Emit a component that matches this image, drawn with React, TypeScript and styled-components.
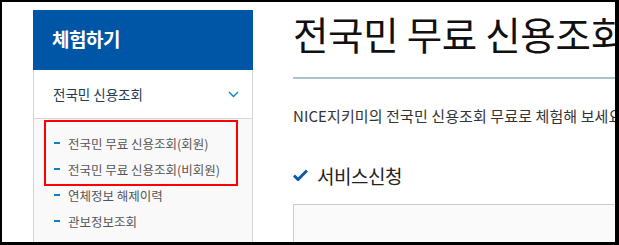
import React from 'react';
import styled, { createGlobalStyle } from 'styled-components';

const GlobalStyle = createGlobalStyle`
  html, body {
    margin: 0;
    padding: 0;
    background: #000;
  }
  body {
    font-family: "Noto Sans CJK KR", "Noto Sans", sans-serif;
  }
`;

const Frame = styled.div`
  box-sizing: border-box;
  width: 619px;
  height: 245px;
  border-style: solid;
  border-color: #000;
  border-width: 2px 4px 3px 2px;
  background: #fff;
  overflow: hidden;
`;

const Page = styled.div`
  display: flex;
  align-items: flex-start;
  padding: 8px 0 0 31px;
`;

const Sidebar = styled.aside`
  position: relative;
  flex: 0 0 220px;
  width: 220px;
`;

const SideHeader = styled.h2`
  margin: 0;
  height: 60px;
  box-sizing: border-box;
  padding: 15px 0 0 19px;
  background: #0056a6;
  color: #fff;
  font-size: 19px;
  font-weight: 700;
  letter-spacing: -0.5px;
`;

const NavItem = styled.div`
  display: flex;
  align-items: center;
  justify-content: space-between;
  height: 48px;
  padding: 0 13px 0 19px;
  border-left: 1px solid #d5d5d5;
  border-right: 1px solid #d5d5d5;
  border-bottom: 1px solid #d5d5d5;
  color: #233a55;
  font-size: 13.5px;
`;

const SubMenu = styled.ul`
  list-style: none;
  margin: 0;
  padding: 11px 0 20px 20px;
  background: #f9f9f9;
  border-left: 1px solid #d5d5d5;
  border-right: 1px solid #d5d5d5;
`;

const SubItem = styled.li`
  display: flex;
  align-items: center;
  height: 26px;
  color: #555;
  font-size: 12.5px;
  white-space: nowrap;

  &::before {
    content: '';
    width: 6px;
    height: 2px;
    margin-right: 8px;
    background: #0a82c8;
  }
`;

const Highlight = styled.div`
  position: absolute;
  left: 11px;
  top: 110px;
  width: 190px;
  height: 62px;
  border: 2px solid #f00;
  pointer-events: none;
`;

const Main = styled.main`
  flex: 1 0 auto;
  margin-left: 40px;
  white-space: nowrap;
`;

const Title = styled.h1`
  margin: 0;
  height: 67px;
  color: #111;
  font-size: 38.5px;
  font-weight: 400;
  line-height: 46px;
  letter-spacing: -0.3px;
`;

const Rule = styled.hr`
  margin: 0;
  width: 400px;
  height: 2px;
  border: 0;
  background: #a8c2d2;
`;

const Lead = styled.p`
  margin: 27px 0 0;
  color: #333;
  font-size: 15px;
  line-height: 20px;
  letter-spacing: 0.1px;
`;

const SectionTitle = styled.h3`
  display: flex;
  align-items: center;
  gap: 9px;
  margin: 36px 0 0;
  height: 26px;
  color: #222;
  font-size: 19px;
  font-weight: 400;
  letter-spacing: -0.5px;
`;

const FormBox = styled.div`
  margin-top: 16px;
  width: 400px;
  height: 60px;
  border: 1px solid #ccc;
  background: #fafafa;
`;

const Chevron = () => (
  <svg width="11" height="7" viewBox="0 0 11 7" fill="none">
    <path d="M1 1l4.5 4.5L10 1" stroke="#0a82c8" strokeWidth="1.3" />
  </svg>
);

const Check = () => (
  <svg width="15" height="12" viewBox="0 0 15 12">
    <path d="M1 6.5l4 4L14 1.5" fill="none" stroke="#0b5aa8" strokeWidth="3" />
  </svg>
);

const App = () => (
  <Frame>
    <GlobalStyle />
    <Page>
      <Sidebar>
        <SideHeader>체험하기</SideHeader>
        <NavItem>
          <span>전국민 신용조회</span>
          <Chevron />
        </NavItem>
        <SubMenu>
          <SubItem>전국민 무료 신용조회(회원)</SubItem>
          <SubItem>전국민 무료 신용조회(비회원)</SubItem>
          <SubItem>연체정보 해제이력</SubItem>
          <SubItem>관보정보조회</SubItem>
        </SubMenu>
        <Highlight />
      </Sidebar>
      <Main>
        <Title>전국민 무료 신용조회</Title>
        <Rule />
        <Lead>NICE지키미의 전국민 신용조회 무료로 체험해 보세요.</Lead>
        <SectionTitle>
          <Check />
          서비스신청
        </SectionTitle>
        <FormBox />
      </Main>
    </Page>
  </Frame>
);

export default App;
